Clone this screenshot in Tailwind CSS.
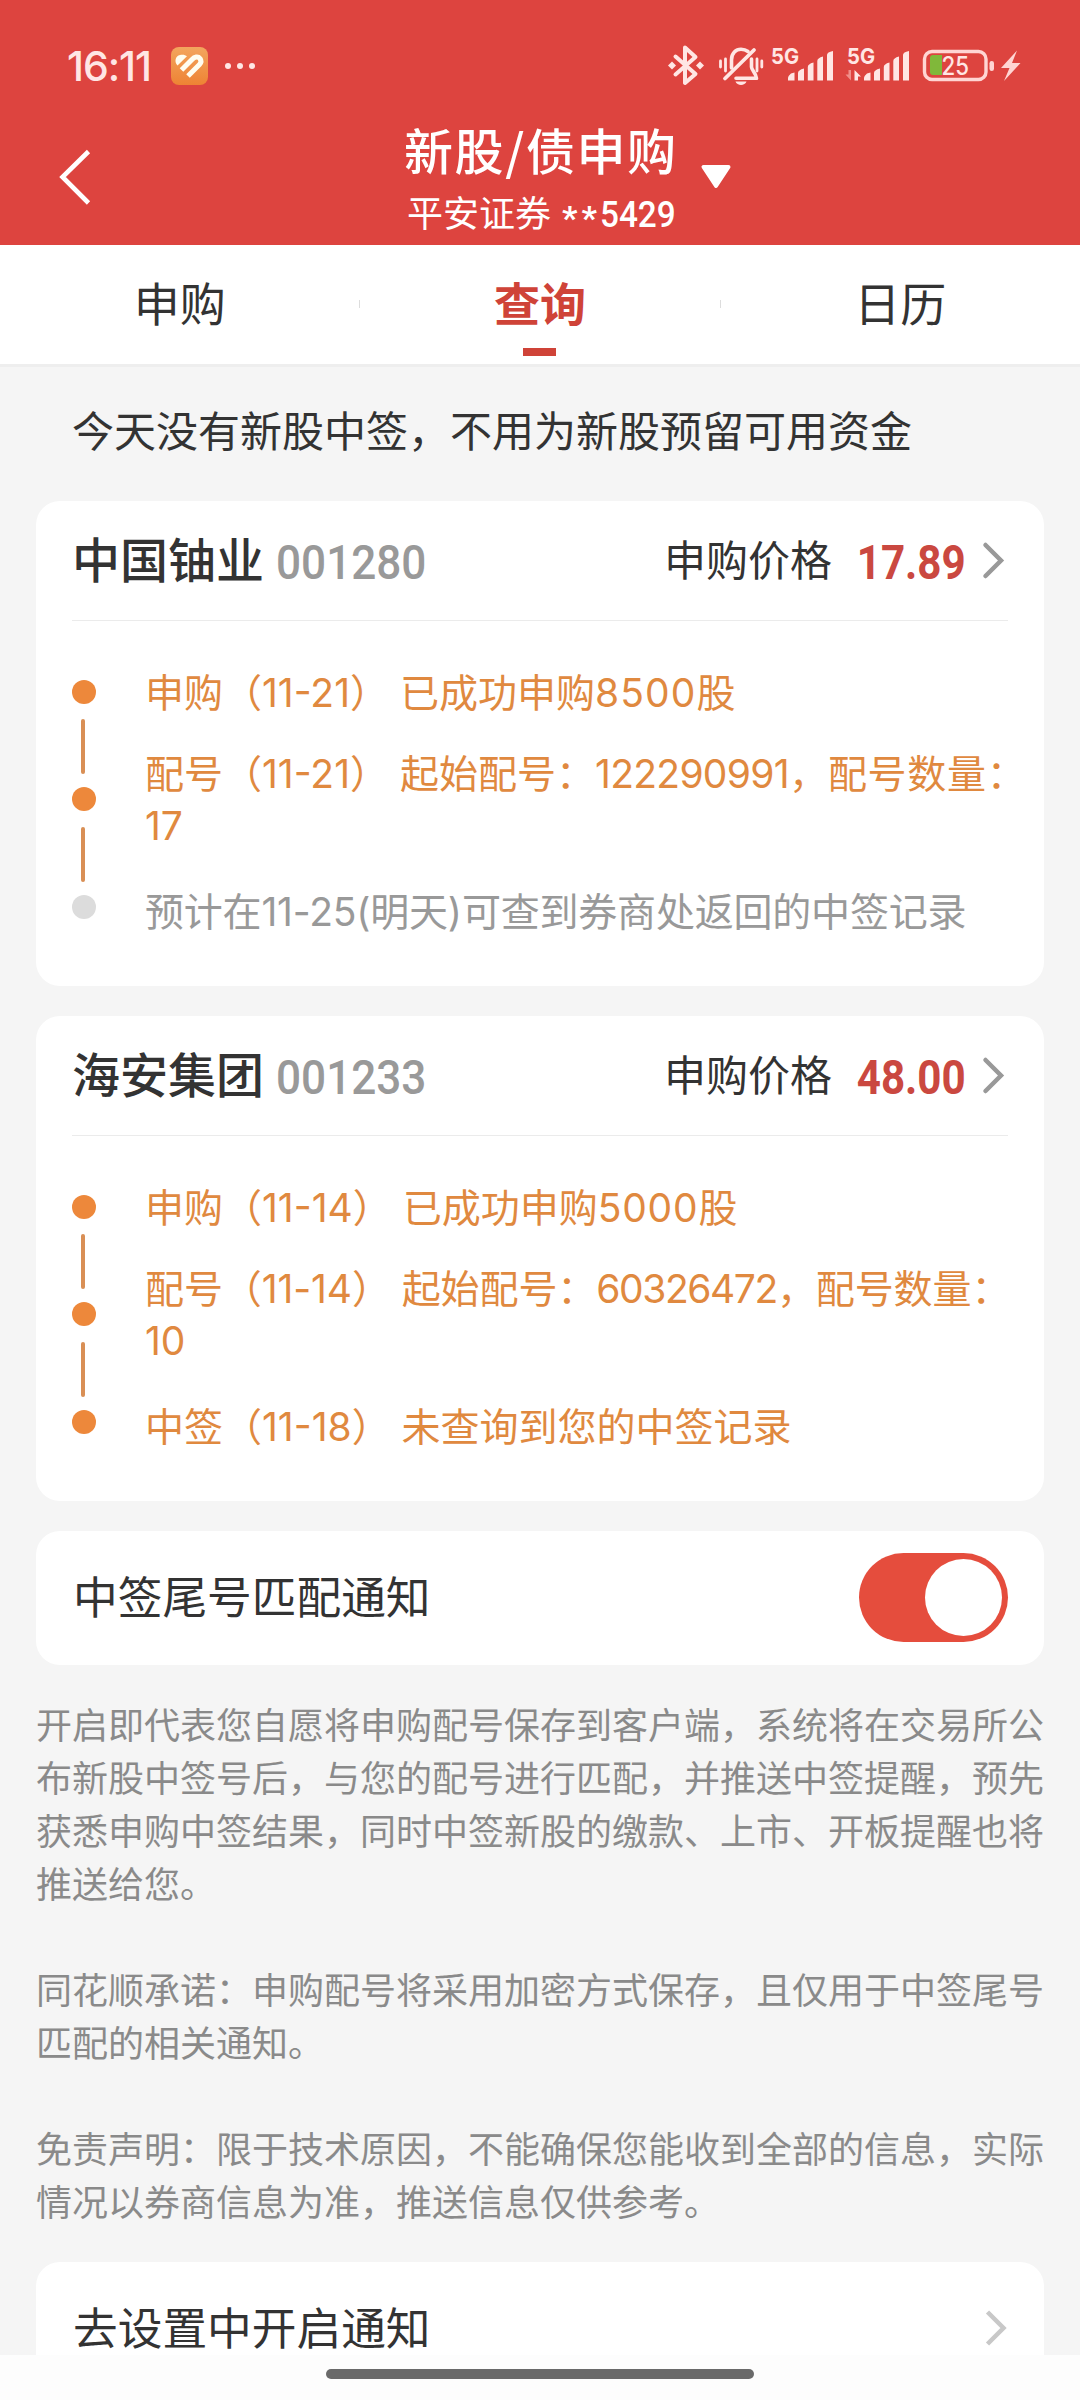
<!DOCTYPE html>
<html lang="zh-CN">
<head>
<meta charset="utf-8">
<title>新股/债申购</title>
<script src="https://cdn.jsdelivr.net/npm/@tailwindcss/browser@4"></script>
</head>
<body class="bg-[#f5f5f5]">
<div class="w-[1080px] h-[2400px] overflow-hidden flex flex-col bg-[#f5f5f5] text-[#333] whitespace-nowrap font-['Inter','Noto_Sans_CJK_SC',sans-serif]">

  <header class="h-[245px] shrink-0 bg-[#dd443f] text-white flex flex-col">
    <!-- status bar -->
    <div class="h-[96px] pt-9 pl-[67px] pr-[50px] flex justify-between">
      <div class="flex h-[60px] items-center text-[#ffe6e4]">
        <span class="w-[104px] text-[41px] leading-[60px] font-medium tracking-[-1.100px]">16:11</span>
        <svg class="w-[37px] h-[38px]" viewBox="0 0 37 38">
          <defs><linearGradient id="app" x1="0" y1="0" x2="0" y2="1"><stop offset="0" stop-color="#f3a55e"/><stop offset="1" stop-color="#ee8334"/></linearGradient></defs>
          <rect width="37" height="38" rx="8" fill="url(#app)"/>
          <path d="M6.500 18.500C3 15 4.300 9 9 8C12 7.200 14.500 8 16 9.300Z" fill="#fffdf0"/>
          <path d="M10.500 23L21 12.500C23.500 9.800 27 9 29 11.500C30.500 13.700 30.200 15.800 28.500 17.500L17 29" fill="none" stroke="#fffdf0" stroke-width="5"/>
        </svg>
        <div class="flex gap-[6px] ml-[17px]">
          <i class="size-[6px] rounded-full bg-current"></i><i class="size-[6px] rounded-full bg-current"></i><i class="size-[6px] rounded-full bg-current"></i>
        </div>
      </div>
      <svg class="w-[370px] h-[60px]" viewBox="0 0 370 60" fill="none" stroke="#ffe6e4" stroke-linejoin="round" stroke-linecap="round">
        <path d="M15.500 20.500L35.500 38L25 47V11.500L35.500 21L15.500 38.500" stroke-width="4"/>
        <path d="M8 29.500L12 25.500L16 29.500L12 33.500ZM36 29.500L40 25.500L44 29.500L40 33.500Z" fill="#ffe6e4" stroke="none"/>
        <path d="M60.500 25V31M65.500 23V35M97 23V35M101.800 25V31" stroke-width="2.800"/>
        <path d="M71.500 32V24C71.500 17 76 13.300 81 13.300C84 13.300 86 14 88 15.500" stroke-width="3.600"/>
        <path d="M91.500 23V31C91.500 34 96 37 96.500 42.300H76" stroke-width="3.600"/>
        <path d="M94 14L65 42.500" stroke-width="3.800"/>
        <path d="M75.500 45.500H86.500C85 50 77 50 75.500 45.500Z" fill="#ffe6e4" stroke="none"/>
        <g fill="#ffe6e4" stroke="none">
          <path d="M128 44.500V42Q128 40 131 37.500L134.500 36.500V44.500ZM138 44.500V37Q138 34 144 32.500V44.500ZM147.800 44.500V31Q147.800 28 153.500 26.500V44.500ZM157.300 44.500V25Q157.300 22 163 20.500V44.500ZM167 44.500V19Q167 16 173 15V44.500Z"/>
          <path d="M204 44.500V42Q204 40 207 37.500L210.500 36.500V44.500ZM214 44.500V37Q214 34 220 32.500V44.500ZM223.800 44.500V31Q223.800 28 229.500 26.500V44.500ZM233.300 44.500V25Q233.300 22 239 20.500V44.500ZM243 44.500V19Q243 16 249 15V44.500Z"/>
          <path d="M191 34V44.500L185.500 38.500H188.500V34Z" fill="#f08f8a"/>
          <path d="M194.500 44.500V34L201 40.500H198V44.500Z"/>
          <text x="111" y="27.500" font-size="22" font-weight="700" textLength="28" lengthAdjust="spacingAndGlyphs">5G</text>
          <text x="187" y="27.500" font-size="22" font-weight="700" textLength="28" lengthAdjust="spacingAndGlyphs">5G</text>
        </g>
        <rect x="264.500" y="15.500" width="61.500" height="28" rx="7.500" stroke-width="3.400" stroke="#ffd5d3"/>
        <path d="M273 19H282V39H273Q270 39 270 36V22Q270 19 273 19Z" fill="#80b83a" stroke="none"/>
        <rect x="329.500" y="25" width="4.500" height="10" rx="2.200" fill="#ffd5d3" stroke="none"/>
        <text x="281.500" y="38.500" font-size="25" fill="#ffe6e4" stroke="none" font-weight="500" textLength="27.500" lengthAdjust="spacingAndGlyphs">25</text>
        <path d="M357 14.500L341 32H349.500L344 45L360.500 27H352Z" fill="#ffd5d3" stroke="none"/>
      </svg>
    </div>
    <!-- title bar -->
    <div class="h-[149px] flex">
      <svg class="w-[405px] h-[149px] shrink-0" viewBox="0 0 405 149" fill="none" stroke="#fff" stroke-width="4.600"><path d="M88.500 55.500L62.500 81L88.500 107"/></svg>
      <div class="w-[272px] shrink-0 pt-[21px]">
        <div class="h-[66px] leading-[64px] text-[49px] tracking-[1.600px] -ml-[1px] font-medium font-['Noto_Sans_CJK_SC',sans-serif]">新股/债申购</div>
        <div class="h-[62px] leading-[62px] text-[36px] pl-[2px] flex"><span class="w-[155px] shrink-0">平安证券</span><span class="w-[38px] shrink-0 text-[34px] tracking-[4px] leading-[70px] font-bold font-['Roboto',sans-serif]">**</span><span class="shrink-0 text-[37px] leading-[64px] font-medium font-['Roboto',sans-serif] origin-left scale-x-[0.9]">5429</span></div>
      </div>
      <svg class="w-[32px] h-[26px] ml-[23px] mt-[68px]" viewBox="0 0 32 26"><path d="M3.500 3H28.500L16 22Z" fill="#fff" stroke="#fff" stroke-width="4" stroke-linejoin="round"/></svg>
    </div>
  </header>

  <nav class="h-[122px] shrink-0 bg-white border-b-[3px] border-[#eeeeee] flex items-start text-[46px] leading-[119px]">
    <div class="flex-1 text-center">申购</div>
    <i class="w-px h-2 bg-[#ddd] mt-[55px]"></i>
    <div class="flex-1 flex flex-col items-center text-[#cf4338] font-bold">
      <span class="h-[103px]">查询</span>
      <i class="w-[33px] h-2 bg-[#cf4338]"></i>
    </div>
    <i class="w-px h-2 bg-[#ddd] mt-[55px]"></i>
    <div class="flex-1 text-center">日历</div>
  </nav>

  <main class="h-[1988px] shrink-0 overflow-hidden px-9 flex flex-col">
    <p class="h-[134px] shrink-0 leading-[130px] pl-[36px] text-[42px]">今天没有新股中签，不用为新股预留可用资金</p>

    <section class="h-[485px] shrink-0 mb-[30px] rounded-[24px] bg-white px-9">
      <div class="h-[120px] border-b border-[#ebebeb] flex items-center">
        <h2 class="text-[48px] leading-[60px] font-medium">中国铀业</h2>
        <span class="ml-[12px] pt-[5px] text-[49px] leading-[60px] text-[#999] font-medium font-['Roboto',sans-serif] origin-left scale-x-[0.9]">001280</span>
        <span class="ml-auto text-[42px] leading-[60px]">申购价格</span>
        <span class="w-[134px] flex justify-end pt-[5px] text-[49px] leading-[60px] font-bold text-[#ca4840] font-['Roboto',sans-serif]"><span class="origin-right scale-x-[0.86]">17.89</span></span>
        <svg class="w-[42px] h-[40px]" viewBox="0 0 42 40" fill="none" stroke="#999" stroke-width="4.500" stroke-linecap="round"><path d="M19.500 4L35 19.500L19.500 35"/></svg>
      </div>
      <div class="flex text-[#e0893f]">
        <div class="w-[73px] shrink-0 pt-[59px] flex flex-col">
          <i class="size-6 rounded-full bg-[#ed883b]"></i>
          <i class="w-1 h-[55px] rounded-full bg-[#d98f55] ml-[9px] mt-[15px] mb-[13px]"></i>
          <i class="size-6 rounded-full bg-[#ed883b]"></i>
          <i class="w-1 h-[55px] rounded-full bg-[#d98f55] ml-[9px] mt-[16px] mb-[13px]"></i>
          <i class="size-6 rounded-full bg-[#dcdcdc]"></i>
        </div>
        <div class="pt-[46px] text-[39px] leading-[52px]">
          <p class="mb-[29px]">申购（11-21） 已成功申购<span class="tracking-[1.100px]">8500</span>股</p>
          <p class="mb-[34px]">配号（11-21） 起始配号：<span class="tracking-[-0.700px]">122290991</span>，<span class="tracking-[0.700px]">配号数量：</span><br>17</p>
          <p class="text-[#999] tracking-[-0.200px]">预计在11-25(明天)可查到券商处返回的中签记录</p>
        </div>
      </div>
    </section>

    <section class="h-[485px] shrink-0 mb-[30px] rounded-[24px] bg-white px-9">
      <div class="h-[120px] border-b border-[#ebebeb] flex items-center">
        <h2 class="text-[48px] leading-[60px] font-medium">海安集团</h2>
        <span class="ml-[12px] pt-[5px] text-[49px] leading-[60px] text-[#999] font-medium font-['Roboto',sans-serif] origin-left scale-x-[0.9]">001233</span>
        <span class="ml-auto text-[42px] leading-[60px]">申购价格</span>
        <span class="w-[134px] flex justify-end pt-[5px] text-[49px] leading-[60px] font-bold text-[#ca4840] font-['Roboto',sans-serif]"><span class="origin-right scale-x-[0.86]">48.00</span></span>
        <svg class="w-[42px] h-[40px]" viewBox="0 0 42 40" fill="none" stroke="#999" stroke-width="4.500" stroke-linecap="round"><path d="M19.500 4L35 19.500L19.500 35"/></svg>
      </div>
      <div class="flex text-[#e0893f]">
        <div class="w-[73px] shrink-0 pt-[59px] flex flex-col">
          <i class="size-6 rounded-full bg-[#ed883b]"></i>
          <i class="w-1 h-[55px] rounded-full bg-[#d98f55] ml-[9px] mt-[15px] mb-[13px]"></i>
          <i class="size-6 rounded-full bg-[#ed883b]"></i>
          <i class="w-1 h-[55px] rounded-full bg-[#d98f55] ml-[9px] mt-[16px] mb-[13px]"></i>
          <i class="size-6 rounded-full bg-[#ed883b]"></i>
        </div>
        <div class="pt-[46px] text-[39px] leading-[52px]">
          <p class="mb-[29px]">申购（11-14） 已成功申购<span class="tracking-[0.800px]">5000</span>股</p>
          <p class="mb-[34px] tracking-[-0.100px]">配号（11-14） 起始配号：<span class="tracking-[-1.400px]">60326472</span>，配号数量：<br>10</p>
          <p>中签（11-18） 未查询到您的中签记录</p>
        </div>
      </div>
    </section>

    <section class="h-[134px] shrink-0 rounded-[24px] bg-white px-9 flex items-center justify-between">
      <span class="text-[44.700px] leading-[60px] pl-px">中签尾号匹配通知</span>
      <div class="w-[149px] h-[89px] mb-px rounded-full bg-[#e54d3d] flex items-center justify-end pr-[6px]"><i class="size-[77px] rounded-full bg-white"></i></div>
    </section>

    <div class="h-[564px] shrink-0 pt-[35px] mb-[33px] text-[36px] leading-[53px] text-[#8a8a8a]">
      <p>开启即代表您自愿将申购配号保存到客户端，系统将在交易所公<br>布新股中签号后，与您的配号进行匹配，并推送中签提醒，预先<br>获悉申购中签结果，同时中签新股的缴款、上市、开板提醒也将<br>推送给您。</p>
      <p class="mt-[53px]">同花顺承诺：申购配号将采用加密方式保存，且仅用于中签尾号<br>匹配的相关通知。</p>
      <p class="mt-[53px]">免责声明：限于技术原因，不能确保您能收到全部的信息，实际<br>情况以券商信息为准，推送信息仅供参考。</p>
    </div>

    <section class="h-[134px] shrink-0 rounded-[24px] bg-white px-9 flex items-center justify-between">
      <span class="text-[44.700px] leading-[60px] pl-px">去设置中开启通知</span>
      <svg class="w-[24px] h-[40px]" viewBox="0 0 24 40" fill="none" stroke="#c8c8c8" stroke-width="4.500"><path d="M3.500 3L19.500 19L3.500 35"/></svg>
    </section>
  </main>

  <footer class="h-[45px] shrink-0 bg-[#fdfdfd] flex justify-center pt-[14px]">
    <i class="w-[428px] h-[10px] rounded-full bg-[#6a6a6a]"></i>
  </footer>
</div>
</body>
</html>
